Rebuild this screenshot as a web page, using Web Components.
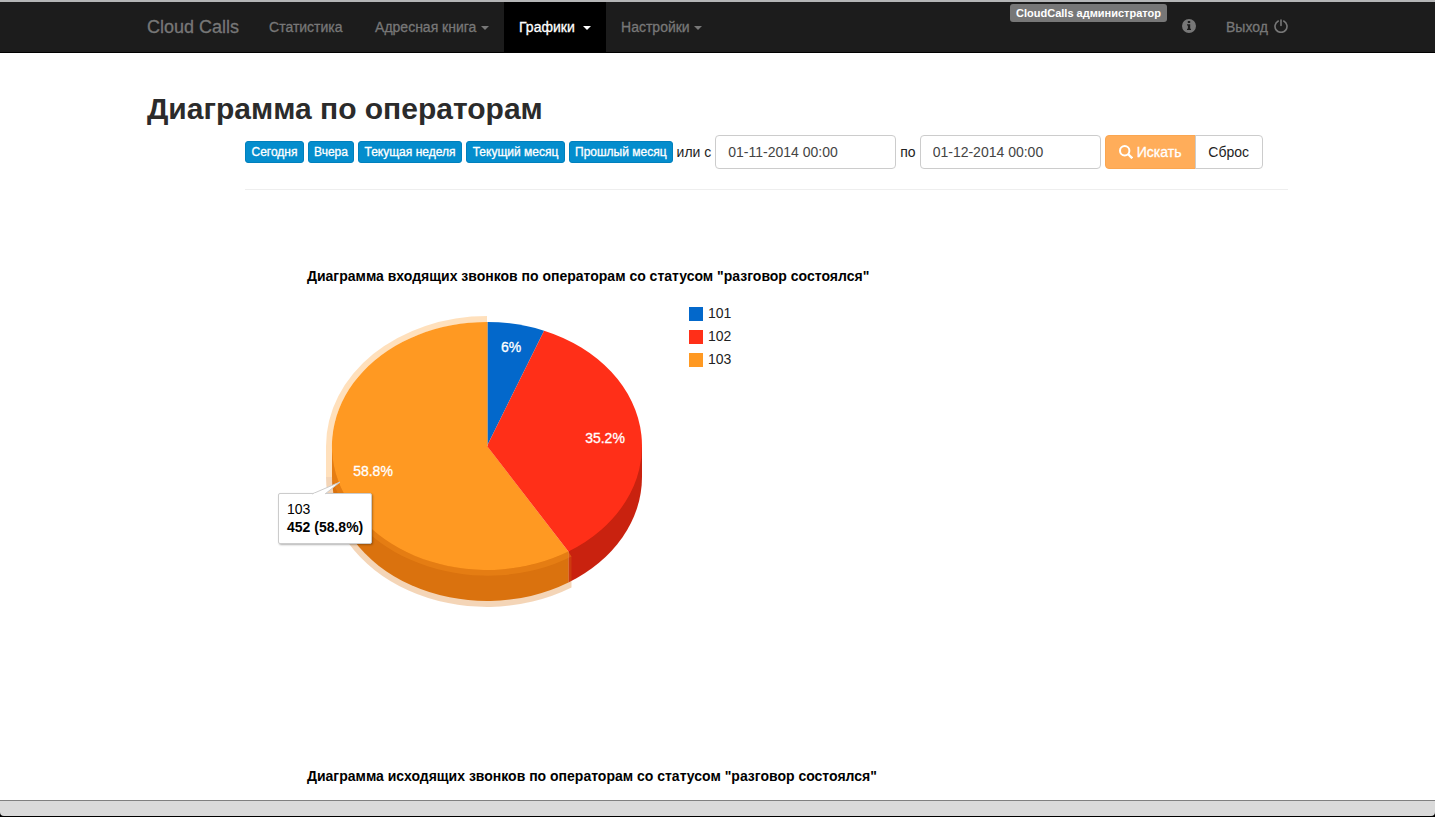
<!DOCTYPE html>
<html lang="ru">
<head>
<meta charset="utf-8">
<title>Cloud Calls</title>
<style>
html, body { margin: 0; }
body { font: 14px/20px "Liberation Sans", Arial, sans-serif; color: #222; background: #fff; }
</style>
</head>
<body>
<cc-window>
  <cc-navbar slot="top"></cc-navbar>
  <cc-report heading="Диаграмма по операторам">
    <cc-filter slot="filter"></cc-filter>
    <cc-pie heading='Диаграмма входящих звонков по операторам со статусом "разговор состоялся"' drawn></cc-pie>
    <cc-pie heading='Диаграмма исходящих звонков по операторам со статусом "разговор состоялся"'></cc-pie>
  </cc-report>
</cc-window>

<script>
function define(name, html, setup) {
  const template = document.createElement('template');
  template.innerHTML = html;
  customElements.define(name, class extends HTMLElement {
    constructor() {
      super();
      this.attachShadow({ mode: 'open' }).append(template.content.cloneNode(true));
    }
    connectedCallback() { if (setup) setup(this, this.shadowRoot); }
  });
}

define('cc-window', `
<style>
:host { display: flex; flex-direction: column; height: 100vh; overflow: hidden; background: #000; }
.edge { flex: none; height: 2px; background: #b4b5b6; }
main { flex: 1; min-height: 0; overflow: hidden; background: #fff; }
footer { flex: none; box-sizing: border-box; height: 16px; margin-bottom: 1px; border-top: 1px solid #808080; background: #dadada; border-radius: 0 0 4px 4px; }
</style>
<div class="edge"></div>
<slot name="top"></slot>
<main><slot></slot></main>
<footer></footer>`);

define('cc-caret', `
<style>
:host { display: block; border: 4px solid transparent; border-top-color: currentColor; border-bottom: 0; margin-top: 1px; }
</style>`);

define('cc-nav-item', `
<style>
:host { display: block; box-sizing: border-box; color: #777; }
:host([active]) { background: #000; color: #fff; }
a { display: flex; align-items: center; justify-content: space-between; min-height: 20px; padding: 15px; color: inherit; text-decoration: none; white-space: nowrap; -webkit-text-stroke: 0.3px; }
</style>
<a href="#"><slot></slot></a>`);

define('cc-navbar', `
<style>
:host { display: block; flex: none; background: #1c1c1c; border-bottom: 1px solid #000; }
nav { display: flex; height: 50px; max-width: 1141px; margin: 0 auto; color: #777; }
.brand { padding: 15px 15px 15px 0; font-size: 18px; color: inherit; text-decoration: none; -webkit-text-stroke: 0.3px; }
.stats { min-width: 106px; }
.book { min-width: 144px; }
.charts { min-width: 102px; }
.settings { min-width: 111px; }
.right { display: flex; margin-left: auto; }
.user { align-self: flex-start; margin-top: 2px; padding: 0 6px; border-radius: 3px; background: #777; color: #fff; font-size: 11px; font-weight: bold; line-height: 18px; white-space: nowrap; }
svg { display: block; fill: currentColor; margin-top: -2px; }
.power { fill: none; stroke: currentColor; stroke-width: 1.6; stroke-linecap: round; }
.last { min-width: 92px; margin-right: -15px; }
</style>
<nav>
  <a class="brand" href="#">Cloud Calls</a>
  <cc-nav-item class="stats">Статистика</cc-nav-item>
  <cc-nav-item class="book">Адресная книга<cc-caret></cc-caret></cc-nav-item>
  <cc-nav-item class="charts" active>Графики<cc-caret></cc-caret></cc-nav-item>
  <cc-nav-item class="settings">Настройки<cc-caret></cc-caret></cc-nav-item>
  <div class="right">
    <span class="user">CloudCalls администратор</span>
    <cc-nav-item><svg width="14" height="14" viewBox="0 0 14 14"><path fill-rule="evenodd" d="M7 0a7 7 0 1 1 0 14A7 7 0 0 1 7 0ZM5.8 2v2h2.4V2ZM5 5.3v1.2h.9v3.2H5V11h4V9.700H8.200V5.300Z"/></svg></cc-nav-item>
    <cc-nav-item class="last">Выход<svg class="power" width="14" height="14" viewBox="0 0 14 14"><path d="M4.300 2A6 6 0 1 0 9.700 2M7 1v5.500"/></svg></cc-nav-item>
  </div>
</nav>`);

define('cc-report', `
<style>
:host { display: block; max-width: 1141px; margin: 0 auto; padding-top: 39px; }
h1 { margin: 0 0 10px; font-size: 30px; line-height: 33px; color: #2b2b2b; }
section { margin-left: 98px; }
</style>
<h1></h1>
<section><slot name="filter"></slot><slot></slot></section>`,
(host, root) => { root.querySelector('h1').textContent = host.getAttribute('heading'); });

define('cc-preset', `
<style>
:host { display: block; }
button { display: block; box-sizing: border-box; width: 100%; margin: 0; padding: 1px 5px; border: 1px solid #0080bd; border-radius: 3px; background: #048dcd; color: #fff; font: 12px/18px "Liberation Sans", Arial, sans-serif; text-align: center; white-space: nowrap; -webkit-text-stroke: 0.3px; }
</style>
<button type="button"><slot></slot></button>`);

define('cc-filter', `
<style>
:host { display: block; padding-bottom: 20px; margin-bottom: 20px; border-bottom: 1px solid #eee; }
form { display: flex; align-items: center; gap: 4px; white-space: nowrap; }
.day { min-width: 59px; }
.day + .day { min-width: 46px; }
.week { min-width: 104px; }
.month { min-width: 99px; }
.month + .month { min-width: 103px; }
label { min-width: 15px; }
input, .actions button { box-sizing: border-box; height: 34px; margin: 0; padding: 6px 12px; border: 1px solid #ccc; border-radius: 4px; background: #fff; font: 14px/20px "Liberation Sans", Arial, sans-serif; color: #444; }
input { width: 181px; }
.actions { display: flex; }
.actions .search { display: flex; align-items: center; justify-content: center; gap: 4px; min-width: 91px; border-color: #faa651; border-radius: 4px 0 0 4px; background: #ffad5a; color: #fff; -webkit-text-stroke: 0.3px; }
.actions .reset { min-width: 68px; margin-left: -1px; border-radius: 0 4px 4px 0; color: #222; }
svg { fill: none; stroke: currentColor; stroke-width: 2; }
</style>
<form>
  <cc-preset class="day">Сегодня</cc-preset><cc-preset class="day">Вчера</cc-preset><cc-preset class="week">Текущая неделя</cc-preset><cc-preset class="month">Текущий месяц</cc-preset><cc-preset class="month">Прошлый месяц</cc-preset>
  <label for="from">или с</label><input id="from" type="text" value="01-11-2014 00:00">
  <label for="to">по</label><input id="to" type="text" value="01-12-2014 00:00">
  <div class="actions"><button class="search" type="button"><svg width="14" height="14" viewBox="0 0 14 14"><circle cx="5.700" cy="5.700" r="4.700"/><path d="M9 9l4.300 4.300" stroke-width="2.400"/></svg>Искать</button><button class="reset" type="reset">Сброс</button></div>
</form>`);

define('cc-tooltip', `
<style>
:host { display: block; box-sizing: border-box; padding: 6px 8px 7px; border: 1px solid #ccc; border-radius: 2px; background: #fff; box-shadow: 1px 1px 2px rgba(0,0,0,.3); color: #000; line-height: 18px; white-space: nowrap; }
svg { position: absolute; left: 32px; top: -13px; fill: #fff; stroke: #ccc; }
</style>
<svg width="32" height="14" viewBox="0 0 32 14"><path d="M1 13L29 1L14 13"/><path d="M3 13.500H13" stroke="#fff" stroke-width="2"/></svg>
<slot></slot>`);

define('cc-pie', `
<style>
:host { display: block; box-sizing: border-box; height: 500px; padding: 57px 0 0 62px; color: #000; }
h2 { margin: 0; font-size: 14px; line-height: 18px; white-space: nowrap; }
.plot { display: flex; position: relative; }
:host(:not([drawn])) .plot { display: none; }
.plot > svg { flex: none; }
text { fill: #fff; font-size: 14px; text-anchor: middle; stroke: #fff; stroke-width: .3px; }
ul { margin: 0; padding: 17px 0 0; list-style: none; line-height: 23px; }
li { display: flex; align-items: center; gap: 5px; color: #222; }
i { width: 14px; height: 14px; }
cc-tooltip { position: absolute; left: -29px; top: 208px; }
</style>
<h2></h2>
<div class="plot">
  <svg width="382" height="330" viewBox="0 0 382 330">
    <path fill="#c9220f" d="M335 161V192A155 124 0 0 1 261.400 297.500V266.500Z"/>
    <path fill="#dc750f" opacity=".3" d="M180 161L25 161L25 192H19A161 130 0 0 0 264.500 302.600V271.600Z"/>
    <path fill="#ff9922" opacity=".3" d="M19 161H25V192H19Z"/>
    <path fill="#da720e" d="M25 161V192A155 124 0 0 0 261.400 297.500V266.500Z"/>
    <path fill="#ff9922" d="M180 161V37A155 124 0 1 0 261.400 266.500Z"/>
    <path fill="#0368cb" d="M180 161V37A155 124 0 0 1 237.100 45.700Z"/>
    <path fill="#ff2f18" d="M180 161L237.100 45.700A155 124 0 0 1 261.400 266.500Z"/>
    <path fill="#ff9922" opacity=".3" d="M180 37V31A161 130 0 0 0 19 161H25A155 124 0 0 1 180 37Z"/>
    <path fill="#ff9922" opacity=".3" d="M25 161V194A161 130 0 0 0 264.500 271.600L261.400 266.500A155 124 0 0 1 25 161Z"/>
    <path stroke="#ffb25b" stroke-opacity=".7" d="M180.500 37V161"/>
    <text x="204" y="67">6%</text>
    <text x="298" y="158">35.2%</text>
    <text x="66" y="191">58.8%</text>
  </svg>
  <ul>
    <li><i style="background:#0368cb"></i>101</li>
    <li><i style="background:#ff2f18"></i>102</li>
    <li><i style="background:#ff9922"></i>103</li>
  </ul>
  <cc-tooltip>103<br><b>452 (58.8%)</b></cc-tooltip>
</div>`,
(host, root) => { root.querySelector('h2').textContent = host.getAttribute('heading'); });
</script>
</body>
</html>
